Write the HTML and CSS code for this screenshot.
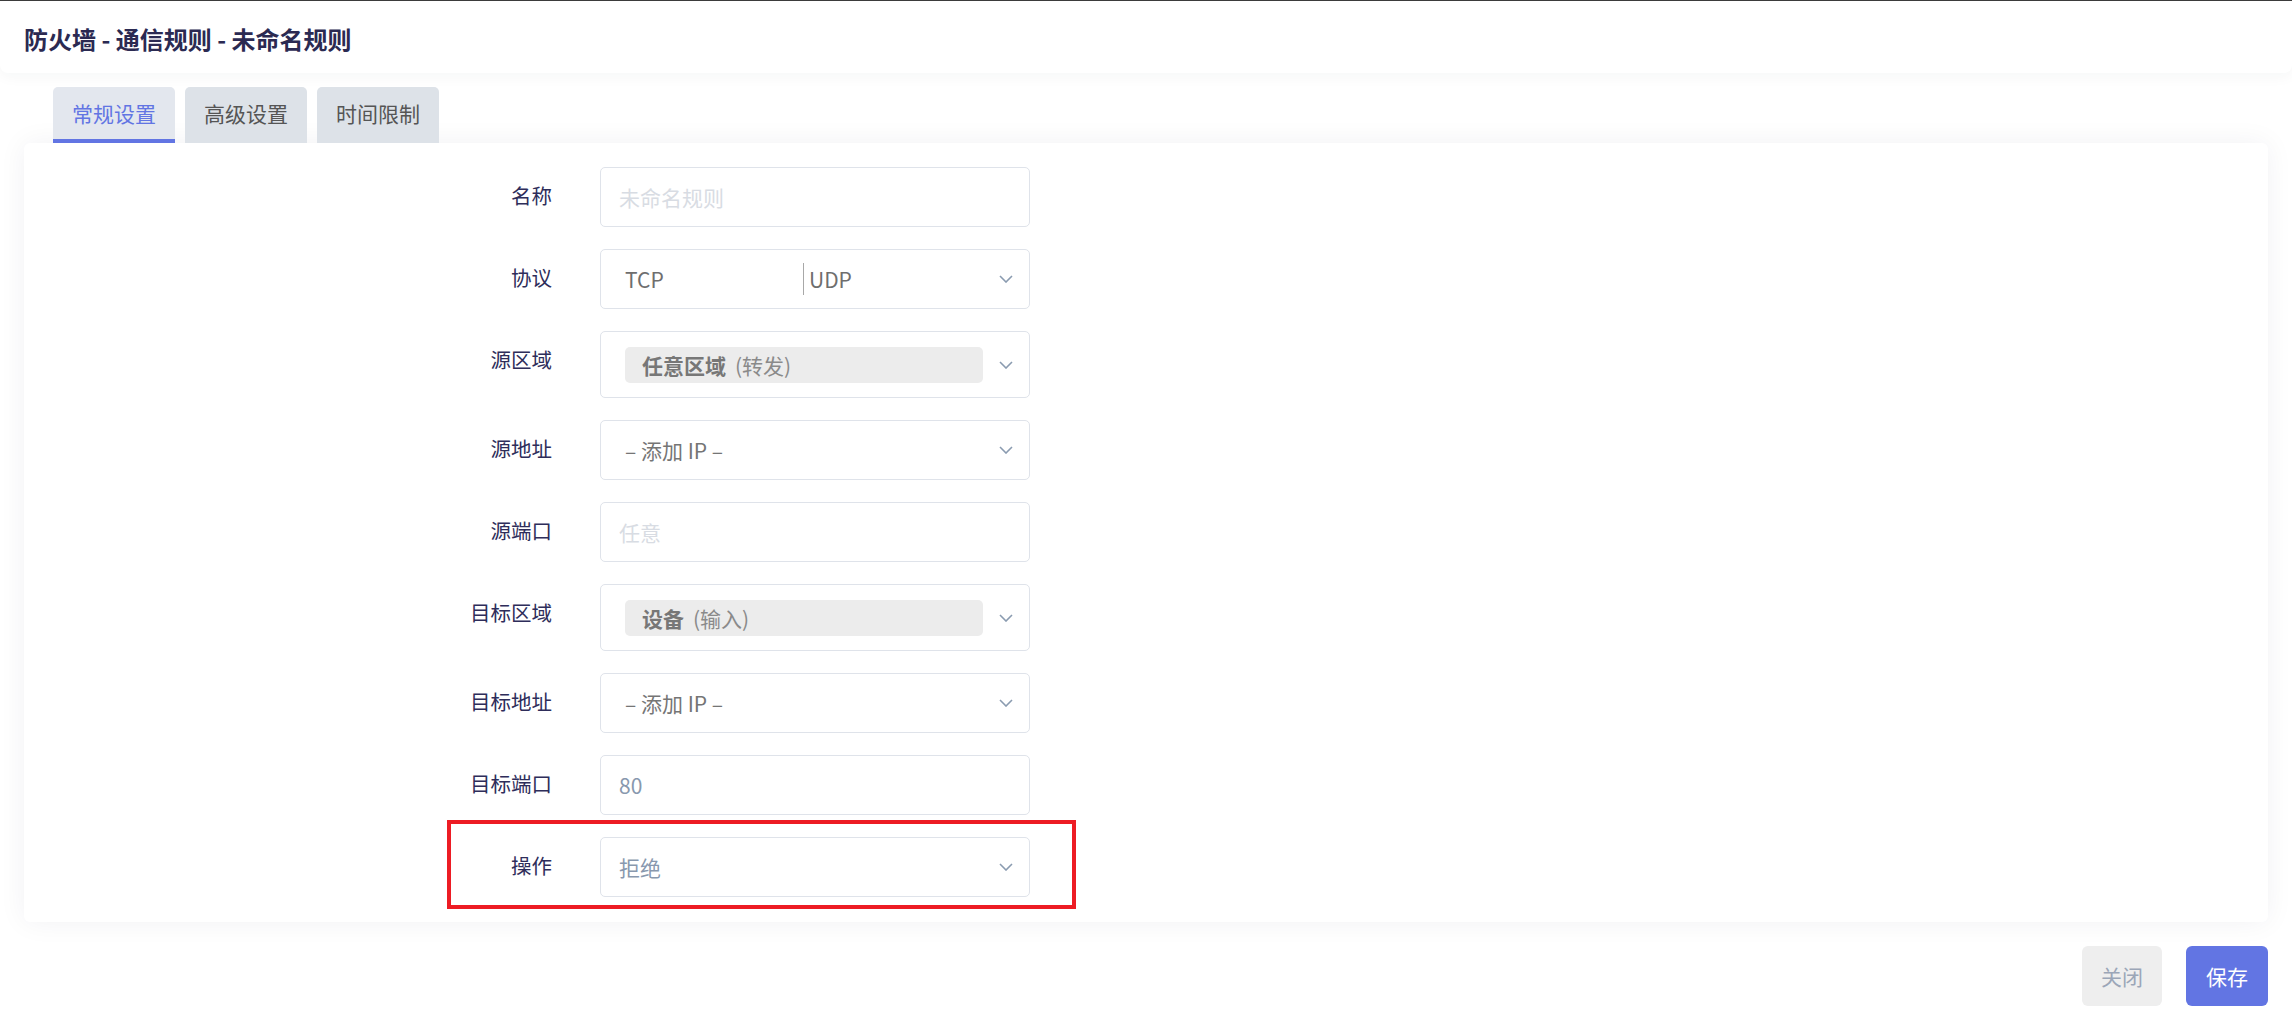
FILE: index.html
```html
<!DOCTYPE html>
<html lang="zh-CN">

<head>
    <meta charset="UTF-8">
    <meta name="viewport" content="width=device-width, initial-scale=1.0">
    <title>防火墙 - 通信规则</title>
    <link rel="stylesheet" href="styles.css">
</head>

<body>
    <div class="dialog">
        <div class="dialog-head">
            <h3>防火墙 - 通信规则 - 未命名规则</h3>
        </div>

        <div class="dialog-body">
            <ul class="tabs">
                <li class="tab active">常规设置</li>
                <li class="tab">高级设置</li>
                <li class="tab">时间限制</li>
            </ul>

            <div class="card">
                <div class="form">
                    <label>名称</label>
                    <div class="field text"><input type="text" placeholder="未命名规则"></div>

                    <label>协议</label>
                    <div class="field">
                        <span class="proto">TCP</span>
                        <span class="sep"></span>
                        <span class="proto-b">UDP</span>
                        <svg class="chev" width="14" height="8" viewBox="0 0 14 8"><path d="M1 1l6 6 6-6" /></svg>
                    </div>

                    <label>源区域</label>
                    <div class="field tall">
                        <span class="tag"><b>任意区域</b><span>(转发)</span></span>
                        <svg class="chev" width="14" height="8" viewBox="0 0 14 8"><path d="M1 1l6 6 6-6" /></svg>
                    </div>

                    <label>源地址</label>
                    <div class="field">
                        <span>– 添加 IP –</span>
                        <svg class="chev" width="14" height="8" viewBox="0 0 14 8"><path d="M1 1l6 6 6-6" /></svg>
                    </div>

                    <label>源端口</label>
                    <div class="field text"><input type="text" placeholder="任意"></div>

                    <label>目标区域</label>
                    <div class="field tall">
                        <span class="tag"><b>设备</b><span>(输入)</span></span>
                        <svg class="chev" width="14" height="8" viewBox="0 0 14 8"><path d="M1 1l6 6 6-6" /></svg>
                    </div>

                    <label>目标地址</label>
                    <div class="field">
                        <span>– 添加 IP –</span>
                        <svg class="chev" width="14" height="8" viewBox="0 0 14 8"><path d="M1 1l6 6 6-6" /></svg>
                    </div>

                    <label>目标端口</label>
                    <div class="field text"><input type="text" class="val" value="80"></div>

                    <label>操作</label>
                    <div class="field text">
                        <span class="val">拒绝</span>
                        <svg class="chev" width="14" height="8" viewBox="0 0 14 8"><path d="M1 1l6 6 6-6" /></svg>
                    </div>
                </div>
            </div>
        </div>

        <div class="dialog-foot">
            <button class="btn btn-close">关闭</button>
            <button class="btn btn-save">保存</button>
        </div>

        <!-- highlight around the action row -->
        <div class="mark"></div>
    </div>
</body>

</html>
```

FILE: styles.css
```css
body {
    margin: 0;
    padding: 0;
    background-color: #fff;
    font-family: "Noto Sans CJK SC", "Noto Sans", sans-serif;
}

.dialog {
    position: relative;
    min-height: 1029px;
}

.dialog-head {
    height: 72px;
    border-top: 1px solid #3b3b3b;
    background-color: #fff;
    border-radius: 0 0 8px 8px;
    box-shadow: 0 4px 14px rgba(30, 40, 60, 0.04);
    display: flex;
    align-items: center;
    padding-left: 24px;
}

.dialog-head h3 {
    margin: 0;
    margin-top: 3px;
    font-size: 24px;
    line-height: 1;
    font-weight: 700;
    color: #2b2a52;
}

.dialog-body {
    padding: 14px 24px 0;
}

.tabs {
    display: flex;
    gap: 10px;
    margin: 0 0 0 29px;
    padding: 0;
    list-style: none;
}

.tab {
    height: 52px;
    padding: 0 19px;
    display: flex;
    align-items: center;
    font-size: 21px;
    color: #555;
    background-color: #dde2e8;
    border-radius: 5px 5px 0 0;
    border-bottom: 4px solid transparent;
}

.tab.active {
    color: #6275e3;
    background-color: #e3e7ee;
    border-bottom-color: #6275e3;
}

.card {
    background-color: #fff;
    border-radius: 6px;
    box-shadow: 0 0 28px rgba(30, 40, 60, 0.06);
    padding: 24px 0 25px;
}

.form {
    display: grid;
    grid-template-columns: 528px 430px;
    column-gap: 48px;
    row-gap: 22px;
}

.form label {
    text-align: right;
    font-size: 20.5px;
    line-height: 30px;
    padding-top: 13px;
    color: #2e2d5a;
}

.field {
    box-sizing: border-box;
    height: 60px;
    display: flex;
    align-items: center;
    padding: 0 16px 0 24px;
    border: 1px solid #dfe3ea;
    border-radius: 5px;
    font-size: 21px;
    color: #757575;
}

.field.text {
    padding-left: 18px;
}

.field.tall {
    height: 67px;
}

.field input {
    width: 100%;
    border: none;
    outline: none;
    padding: 0;
    background: transparent;
    font-family: inherit;
    font-size: inherit;
    color: #757575;
}

.field input::placeholder {
    color: #d8dce3;
}

.field .val,
.field input.val {
    color: #8898ae;
}

.proto {
    width: 178px;
    color: #6e6e6e;
}

.sep {
    width: 1px;
    height: 32px;
    background-color: #a8a8a8;
}

.proto-b {
    margin-left: 5px;
    color: #6e6e6e;
}

.chev {
    margin-left: auto;
    flex-shrink: 0;
}

.chev path {
    fill: none;
    stroke: #8a9bb0;
    stroke-width: 1.6;
}

.tag {
    flex: 1;
    height: 36px;
    display: flex;
    align-items: center;
    padding-left: 17px;
    margin-right: 16px;
    background-color: #ececec;
    border-radius: 5px;
    color: #8a8a8a;
}

.tag b {
    color: #777;
}

.tag span {
    margin-left: 9px;
}

.dialog-foot {
    display: flex;
    justify-content: flex-end;
    gap: 24px;
    padding: 24px 24px 0;
}

.btn {
    height: 60px;
    padding: 0 19px;
    border: none;
    border-radius: 6px;
    font-family: inherit;
    font-size: 21px;
}

.btn-close {
    background-color: #eeeeee;
    color: #9ba6b8;
}

.btn-save {
    padding: 0 20px;
    background-color: #6275e3;
    color: #fff;
}

.mark {
    position: absolute;
    left: 447px;
    top: 820px;
    width: 629px;
    height: 89px;
    box-sizing: border-box;
    border: 4px solid #ed1c24;
    pointer-events: none;
}
```
